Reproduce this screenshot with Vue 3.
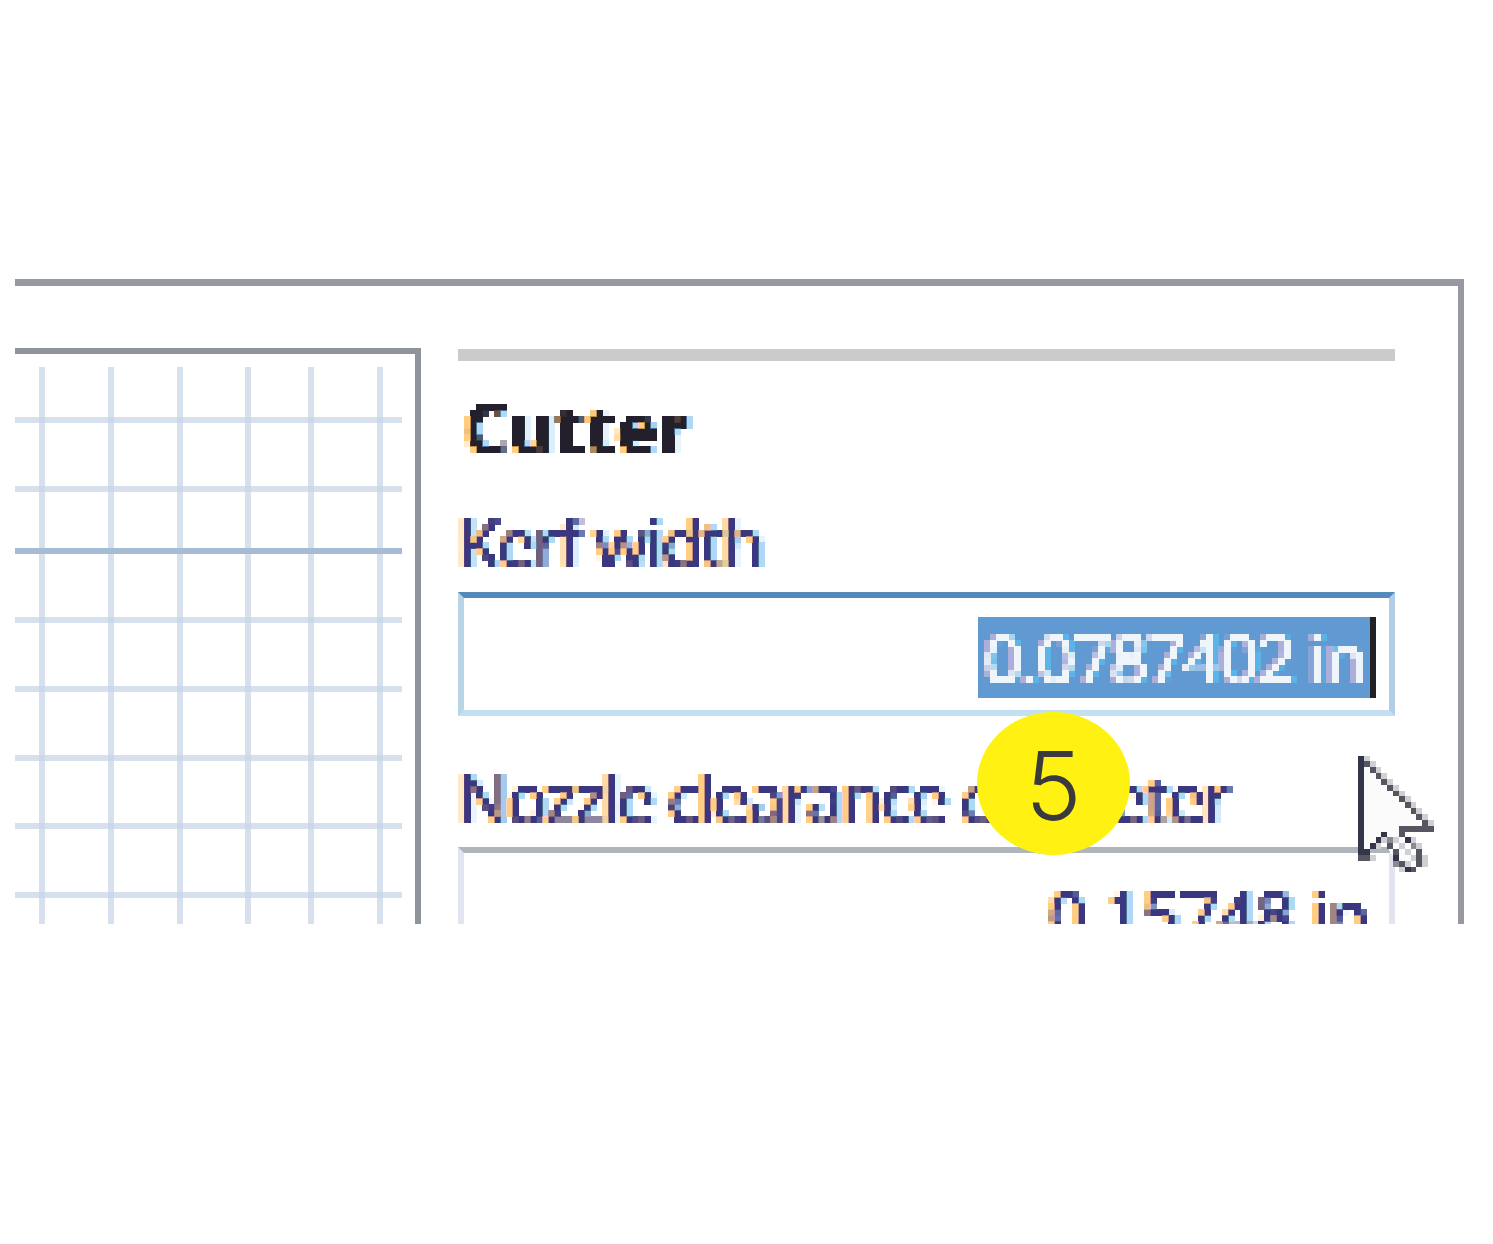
<script setup>
const vLines = [39, 108, 177, 245, 308, 377]
const hLines = [
  { y: 417 }, { y: 486 }, { y: 548, strong: true }, { y: 617 },
  { y: 686 }, { y: 755 }, { y: 823 }, { y: 892 }
]
// Cursor drawn on its 13×20 pixel grid: [column, row, colour]
const dark = '#33354a'
const mid = '#55565f'
const soft = '#8a8b92'
const pale = '#cfd0d4'
const cursorPixels = []
for (let r = 0; r <= 17; r++) cursorPixels.push([0, r, dark])
for (let i = 1; i <= 11; i++) {
  cursorPixels.push([i, i, mid])
  cursorPixels.push([i, i - 1, pale])
}
for (let c = 7; c <= 12; c++) cursorPixels.push([c, 12, mid])
cursorPixels.push([12, 11, pale], [7, 13, mid], [8, 14, dark], [9, 15, soft], [10, 16, mid], [10, 17, mid], [10, 18, mid])
cursorPixels.push([8, 19, dark], [9, 19, mid], [7, 18, mid], [6, 17, dark], [6, 16, mid], [5, 15, mid], [5, 14, soft], [4, 13, dark])
cursorPixels.push([3, 14, dark], [2, 15, dark], [1, 16, dark], [1, 17, mid], [0, 17, mid])
cursorPixels.push([4, 14, pale], [3, 15, pale], [6, 14, pale], [7, 15, pale], [8, 16, pale], [9, 17, pale], [8, 18, pale], [10, 15, pale], [11, 17, pale], [11, 18, pale], [7, 19, pale], [6, 18, soft], [2, 17, pale], [9, 14, pale])
</script>

<template>
  <div class="stage">
    <svg class="filters" width="0" height="0" aria-hidden="true">
      <filter id="px" x="0" y="0" width="100%" height="100%" primitiveUnits="userSpaceOnUse" color-interpolation-filters="sRGB">
        <feFlood x="3" y="3" width="1" height="1" flood-color="#000" />
        <feComposite width="6.2" height="6.2" />
        <feTile result="dots" />
        <feComposite in="SourceGraphic" in2="dots" operator="in" />
        <feMorphology operator="dilate" radius="3" />
      </filter>
    </svg>
    <div class="window">
      <div class="canvas-frame">
        <svg class="grid" width="405" height="576" viewBox="15 348 405 576">
          <rect v-for="x in vLines" :key="x" :x="x" y="367" width="6" height="557" fill="#c4d4e6" fill-opacity=".7" />
          <rect v-for="l in hLines" :key="l.y" x="15" :y="l.y" width="387" height="6"
            :fill="l.strong ? '#a5bcd4' : '#c4d4e6'" :fill-opacity="l.strong ? 1 : .7" />
        </svg>
      </div>
      <div class="panel">
        <div class="rule"></div>
        <h3 class="title"><span class="tx">Cutter</span></h3>
        <label class="label"><span class="tx">Kerf width</span></label>
        <div class="field focus">
          <span class="sel"><span class="tx inv">0.0787402 in</span></span><span class="caret"></span>
        </div>
        <label class="label second"><span class="tx">Nozzle clearance diameter</span></label>
        <div class="field plain"><span class="tx val">0.15748 in</span></div>
      </div>
    </div>
    <div class="badge"><span class="num">5</span></div>
    <svg class="cursor" width="76" height="118" viewBox="0 0 13 20" shape-rendering="crispEdges">
      <path d="M0 0 L12 12 L7 13 L10 19 L7 19 L4 14 L0 18 Z" fill="#fbfbfb" />
      <rect v-for="(p, i) in cursorPixels" :key="i" :x="p[0]" :y="p[1]" width="1" height="1" :fill="p[2]" />
    </svg>
  </div>
</template>

<style>
html, body { background: #fff; }
</style>

<style scoped>
.stage { position: relative; height: 924px; overflow: hidden; background: #fff; font-family: "Noto Sans", sans-serif; }
.filters { position: absolute; }
.window {
  margin: 279px 0 0 15px; width: 1449px; height: 645px; box-sizing: border-box;
  border-top: 7px solid #9698a2; border-right: 6px solid #9698a2;
  display: flex; align-items: flex-start; overflow: hidden;
}
.canvas-frame {
  width: 406px; height: 600px; margin-top: 62px; flex: none; box-sizing: border-box;
  border-top: 6px solid #8f949c; border-right: 6px solid #8f949c;
}
.grid { display: block; margin-top: -6px; }
.panel { margin: 63px 0 0 37px; width: 937px; flex: none; }
.rule { height: 12px; background: #cbcbcb; }
.tx {
  display: inline-block; white-space: nowrap; padding: 0 6px;
  filter: url(#px); color: #3a3680;
  font-size: 68px; line-height: 72px; letter-spacing: -2.5px;
  text-shadow: -3px 0 rgba(255, 190, 90, .75), 3px 0 rgba(120, 190, 240, .6);
}
.title { margin: 31px 0 0 0; font-size: inherit; font-weight: 400; height: 72px; }
.title .tx { font-weight: 700; color: #241f2c; letter-spacing: 1.5px; }
.label { display: block; margin-top: 42px; height: 72px; margin-left: -6px; }
.label.second { margin-top: 46px; }
.label.second .tx { letter-spacing: -2.9px; }
.field { box-sizing: border-box; height: 124px; display: flex; justify-content: flex-end; padding-top: 19px; padding-right: 13px; border: 6px solid; }
.label + .field { margin-top: 14px; }
.field.focus { border-color: #5389bb #b1cee6 #c2e0ef #b8d5e8; }
.label + .field.plain { margin-top: 13px; }
.field.plain { border-color: #b0b4bb #e2e5ef #e2e5ef #e2e5ef; align-items: flex-start; padding-top: 26px; padding-right: 14px; }
.sel { height: 81px; background: #6199d3; display: flex; align-items: center; }
.tx.inv { color: #eef6fc; letter-spacing: -2.2px; text-shadow: -3px 0 rgba(190, 180, 220, .8), 3px 0 rgba(90, 190, 240, .7); }
.caret { width: 6px; height: 81px; background: #222226; }
.tx.val { letter-spacing: -0.8px; }
.badge {
  position: absolute; left: 977px; top: 712px; width: 153px; height: 143px; border-radius: 50%;
  background: #fff212; color: #3a3a3c; display: flex; align-items: center; justify-content: center;
  font-family: Inter, sans-serif; font-weight: 300; font-size: 95px; line-height: 1;
}
.num { padding-top: 3px; }
.cursor { position: absolute; left: 1358px; top: 755px; }
</style>
